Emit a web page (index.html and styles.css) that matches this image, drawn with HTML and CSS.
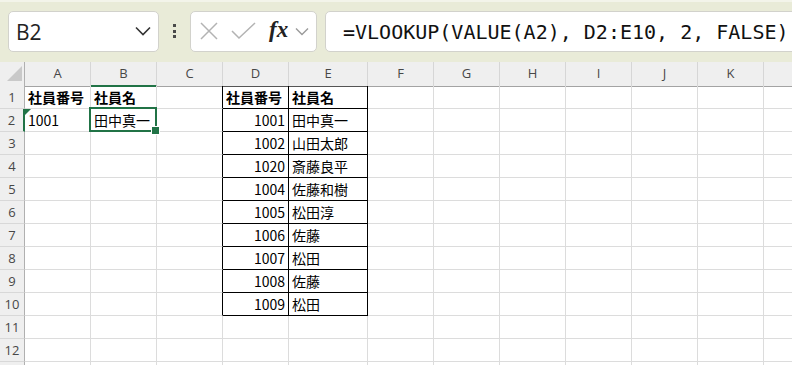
FILE: index.html
```html
<!DOCTYPE html>
<html lang="ja">
<head>
    <meta charset="UTF-8">
    <title>VLOOKUP</title>
    <link rel="stylesheet" href="styles.css">
</head>
<body>
    <div class="formula-bar">
        <div class="name-box">
            <span>B2</span>
            <svg width="16" height="10" viewBox="0 0 16 10"><polyline points="1,1.5 8,8.5 15,1.5" fill="none" stroke="#333" stroke-width="1.6"/></svg>
        </div>
        <div class="grip"><i></i><i></i><i></i></div>
        <div class="fx-box">
            <svg class="ico" width="22" height="20" viewBox="0 0 22 20"><path d="M3 2 L19 18 M19 2 L3 18" stroke="#b3b3b3" stroke-width="1.5" fill="none"/></svg>
            <svg class="ico" width="26" height="18" viewBox="0 0 26 18"><polyline points="1,9 8,16 24,1" stroke="#b3b3b3" stroke-width="1.5" fill="none"/></svg>
            <span class="fx">fx</span>
            <svg width="14" height="9" viewBox="0 0 14 9"><polyline points="1,1.5 7,7.5 13,1.5" fill="none" stroke="#9a9a9a" stroke-width="1.4"/></svg>
        </div>
        <div class="formula">=VLOOKUP(VALUE(A2), D2:E10, 2, FALSE)</div>
    </div>

    <div class="sheet">
        <div class="row head">
            <div class="corner"><i></i></div>
            <div class="ch">A</div><div class="ch on">B</div><div class="ch">C</div>
            <div class="ch tb">D</div><div class="ch tb">E</div>
            <div class="ch">F</div><div class="ch">G</div><div class="ch">H</div>
            <div class="ch">I</div><div class="ch">J</div><div class="ch">K</div><div class="ch"></div>
        </div>
        <div class="row">
            <div class="rh">1</div>
            <div class="c b">社員番号</div><div class="c b">社員名</div><div class="c tl"></div>
            <div class="c t b">社員番号</div><div class="c t b">社員名</div>
            <div class="c"></div><div class="c"></div><div class="c"></div><div class="c"></div><div class="c"></div><div class="c"></div><div class="c"></div>
        </div>
        <div class="row">
            <div class="rh on">2</div>
            <div class="c flag">1001</div><div class="c sel">田中真一</div><div class="c tl"></div>
            <div class="c t num">1001</div><div class="c t">田中真一</div>
            <div class="c"></div><div class="c"></div><div class="c"></div><div class="c"></div><div class="c"></div><div class="c"></div><div class="c"></div>
        </div>
        <div class="row">
            <div class="rh">3</div>
            <div class="c"></div><div class="c"></div><div class="c tl"></div>
            <div class="c t num">1002</div><div class="c t">山田太郎</div>
            <div class="c"></div><div class="c"></div><div class="c"></div><div class="c"></div><div class="c"></div><div class="c"></div><div class="c"></div>
        </div>
        <div class="row">
            <div class="rh">4</div>
            <div class="c"></div><div class="c"></div><div class="c tl"></div>
            <div class="c t num">1020</div><div class="c t">斎藤良平</div>
            <div class="c"></div><div class="c"></div><div class="c"></div><div class="c"></div><div class="c"></div><div class="c"></div><div class="c"></div>
        </div>
        <div class="row">
            <div class="rh">5</div>
            <div class="c"></div><div class="c"></div><div class="c tl"></div>
            <div class="c t num">1004</div><div class="c t">佐藤和樹</div>
            <div class="c"></div><div class="c"></div><div class="c"></div><div class="c"></div><div class="c"></div><div class="c"></div><div class="c"></div>
        </div>
        <div class="row">
            <div class="rh">6</div>
            <div class="c"></div><div class="c"></div><div class="c tl"></div>
            <div class="c t num">1005</div><div class="c t">松田淳</div>
            <div class="c"></div><div class="c"></div><div class="c"></div><div class="c"></div><div class="c"></div><div class="c"></div><div class="c"></div>
        </div>
        <div class="row">
            <div class="rh">7</div>
            <div class="c"></div><div class="c"></div><div class="c tl"></div>
            <div class="c t num">1006</div><div class="c t">佐藤</div>
            <div class="c"></div><div class="c"></div><div class="c"></div><div class="c"></div><div class="c"></div><div class="c"></div><div class="c"></div>
        </div>
        <div class="row">
            <div class="rh">8</div>
            <div class="c"></div><div class="c"></div><div class="c tl"></div>
            <div class="c t num">1007</div><div class="c t">松田</div>
            <div class="c"></div><div class="c"></div><div class="c"></div><div class="c"></div><div class="c"></div><div class="c"></div><div class="c"></div>
        </div>
        <div class="row">
            <div class="rh">9</div>
            <div class="c"></div><div class="c"></div><div class="c tl"></div>
            <div class="c t num">1008</div><div class="c t">佐藤</div>
            <div class="c"></div><div class="c"></div><div class="c"></div><div class="c"></div><div class="c"></div><div class="c"></div><div class="c"></div>
        </div>
        <div class="row">
            <div class="rh">10</div>
            <div class="c"></div><div class="c"></div><div class="c tl"></div>
            <div class="c t num">1009</div><div class="c t">松田</div>
            <div class="c"></div><div class="c"></div><div class="c"></div><div class="c"></div><div class="c"></div><div class="c"></div><div class="c"></div>
        </div>
        <div class="row">
            <div class="rh">11</div>
            <div class="c"></div><div class="c"></div><div class="c"></div><div class="c"></div><div class="c"></div>
            <div class="c"></div><div class="c"></div><div class="c"></div><div class="c"></div><div class="c"></div><div class="c"></div><div class="c"></div>
        </div>
        <div class="row">
            <div class="rh">12</div>
            <div class="c"></div><div class="c"></div><div class="c"></div><div class="c"></div><div class="c"></div>
            <div class="c"></div><div class="c"></div><div class="c"></div><div class="c"></div><div class="c"></div><div class="c"></div><div class="c"></div>
        </div>
        <div class="row">
            <div class="rh"></div>
            <div class="c"></div><div class="c"></div><div class="c"></div><div class="c"></div><div class="c"></div>
            <div class="c"></div><div class="c"></div><div class="c"></div><div class="c"></div><div class="c"></div><div class="c"></div><div class="c"></div>
        </div>
    </div>
</body>
</html>
```

FILE: styles.css
```css
* {
    box-sizing: border-box;
}

html, body {
    margin: 0;
    width: 792px;
    height: 365px;
    overflow: hidden;
    background: #fff;
}

body {
    font-family: "Noto Sans CJK JP", sans-serif;
}

/* formula bar */
.formula-bar {
    height: 62px;
    background: #e9ebd8;
    display: flex;
    align-items: center;
    padding-left: 8px;
    box-shadow: inset 0 2px 0 #f3f4ea;
}

.name-box {
    width: 151px;
    height: 41px;
    background: #fff;
    border: 1px solid #d2d2cc;
    border-radius: 5px;
    display: flex;
    align-items: center;
    justify-content: space-between;
    padding: 0 7px 0 7px;
}

.name-box span {
    font-family: "Open Sans", sans-serif;
    font-size: 21px;
    color: #222;
    padding-top: 1px;
}

.grip {
    width: 31px;
    display: flex;
    flex-direction: column;
    align-items: center;
    gap: 2.5px;
}

.grip i {
    display: block;
    width: 3px;
    height: 3px;
    background: #4a4a4a;
}

.fx-box {
    width: 127px;
    height: 41px;
    background: #fff;
    border: 1px solid #d2d2cc;
    border-radius: 5px;
    display: flex;
    align-items: center;
    padding-left: 7px;
}

.fx-box .ico {
    margin-right: 11px;
}

.fx {
    font-family: "Liberation Serif", serif;
    font-style: italic;
    font-weight: bold;
    font-size: 23px;
    color: #222;
    margin: 0 7px 0 1px;
    padding-bottom: 3px;
}

.formula {
    flex: 1;
    height: 41px;
    margin-left: 8px;
    margin-right: -20px;
    background: #fff;
    border: 1px solid #d2d2cc;
    border-radius: 5px;
    padding-left: 17px;
    font-family: "DejaVu Sans Mono", monospace;
    font-size: 20px;
    line-height: 40px;
    color: #111;
    white-space: nowrap;
}

/* sheet grid */
.row {
    display: grid;
    grid-template-columns: 25px repeat(4, 66px) 79px repeat(7, 66px);
    height: 23px;
}

.row.head {
    height: 24px;
}

.ch, .corner {
    background: #efefef;
    border-right: 1px solid #d6d6d6;
    border-bottom: 1px solid #a3a3a3;
    font-family: "Open Sans", sans-serif;
    font-size: 13px;
    color: #474747;
    text-align: center;
    line-height: 23px;
}

.ch.on {
    border-bottom: 2px solid #217346;
}

.ch.tb {
    border-bottom-color: #555;
}

.corner {
    display: flex;
    justify-content: flex-end;
    align-items: flex-end;
    padding: 0 2px 5px 0;
    border-right-color: #b0b0b0;
}

.corner i {
    width: 0;
    height: 0;
    border-left: 15px solid transparent;
    border-bottom: 15px solid #c9c9c9;
}

.rh {
    background: #efefef;
    border-right: 1px solid #b0b0b0;
    border-bottom: 1px solid #d8d8d8;
    font-family: "Open Sans", sans-serif;
    font-size: 13px;
    color: #474747;
    text-align: center;
    line-height: 22px;
}

.rh.on {
    border-right: 2px solid #217346;
}

.c {
    border-right: 1px solid #dcdcdc;
    border-bottom: 1px solid #dcdcdc;
    font-size: 14px;
    line-height: 22px;
    padding: 0 3px;
    color: #000;
    white-space: nowrap;
    overflow: hidden;
}

.c.b {
    font-weight: bold;
}

.c.num {
    text-align: right;
}

.c.t {
    border-right-color: #000;
    border-bottom-color: #000;
}

.c.tl {
    border-right-color: #000;
}

/* number stored as text marker */
.c.flag {
    position: relative;
}

.c.flag::before {
    content: "";
    position: absolute;
    left: 0;
    top: 0;
    border-top: 6px solid #217346;
    border-right: 6px solid transparent;
}

/* active cell */
.c.sel {
    position: relative;
    overflow: visible;
}

.c.sel::before {
    content: "";
    position: absolute;
    left: -2px;
    top: -2px;
    right: -1px;
    bottom: -1px;
    border: 2px solid #217346;
}

.c.sel::after {
    content: "";
    position: absolute;
    right: -4px;
    bottom: -4px;
    width: 7px;
    height: 7px;
    background: #217346;
    border: 1px solid #fff;
    z-index: 2;
}
```
